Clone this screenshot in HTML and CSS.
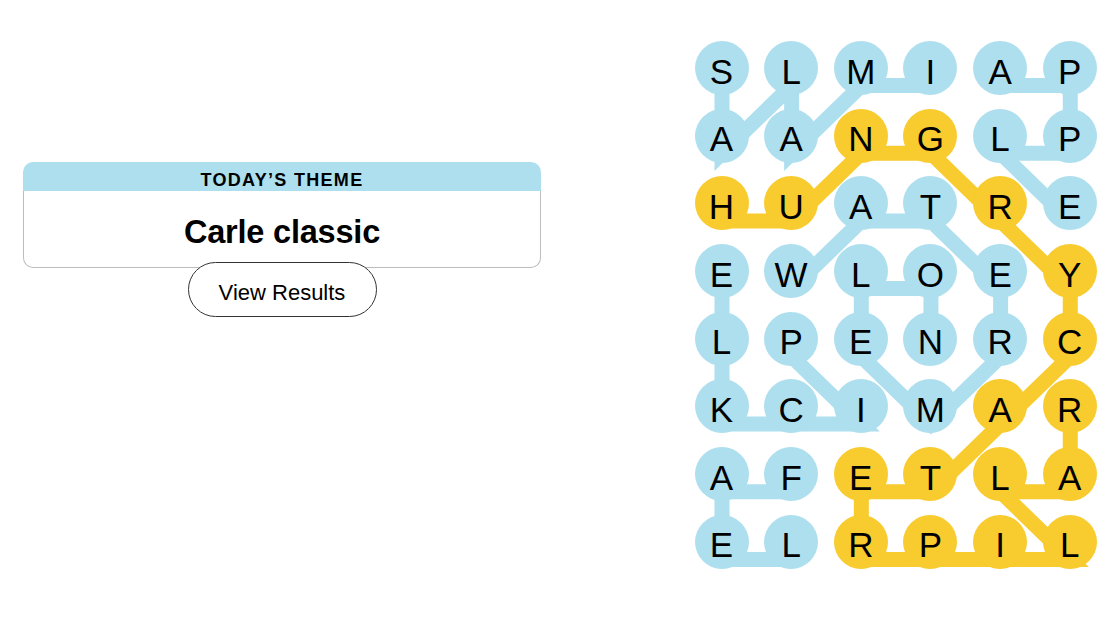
FILE: index.html
```html
<!DOCTYPE html>
<html lang="en">
<head>
<meta charset="utf-8">
<title>Strands</title>
<link rel="stylesheet" href="styles.css">
</head>
<body>
<main class="page">
  <section class="panel">
    <div class="card">
      <div class="card-head">TODAY’S THEME</div>
      <div class="card-body">Carle classic</div>
    </div>
    <button class="results-btn" type="button">View Results</button>
  </section>

  <section class="board">
    <svg class="links" width="403" height="528" viewBox="0 0 403 528" aria-hidden="true">
      <g class="theme-links">
        <polyline points="27,44.5 27,112.2 96.65,44.5 96.65,112.2 166.3,44.5 235.95,44.5"/>
        <polyline points="305.6,44.5 375.25,44.5 375.25,112.2 305.6,112.2 375.25,179.9"/>
        <polyline points="96.65,247.6 166.3,179.9 235.95,179.9 305.6,247.6 305.6,315.3 235.95,383 166.3,315.3 166.3,247.6 235.95,247.6 235.95,315.3"/>
        <polyline points="96.65,315.3 166.3,383 96.65,383 27,383 27,315.3 27,247.6"/>
        <polyline points="96.65,518.4 27,518.4 27,450.7 96.65,450.7"/>
      </g>
      <g class="span-links">
        <polyline points="27,179.9 96.65,179.9 166.3,112.2 235.95,112.2 305.6,179.9 375.25,247.6 375.25,315.3 305.6,383 235.95,450.7 166.3,450.7 166.3,518.4 235.95,518.4 305.6,518.4 375.25,518.4 305.6,450.7 375.25,450.7 375.25,383"/>
      </g>
    </svg>
    <div class="grid">
      <span class="cell theme">S</span><span class="cell theme">L</span><span class="cell theme">M</span><span class="cell theme">I</span><span class="cell theme">A</span><span class="cell theme">P</span>
      <span class="cell theme">A</span><span class="cell theme">A</span><span class="cell span">N</span><span class="cell span">G</span><span class="cell theme">L</span><span class="cell theme">P</span>
      <span class="cell span">H</span><span class="cell span">U</span><span class="cell theme">A</span><span class="cell theme">T</span><span class="cell span">R</span><span class="cell theme">E</span>
      <span class="cell theme">E</span><span class="cell theme">W</span><span class="cell theme">L</span><span class="cell theme">O</span><span class="cell theme">E</span><span class="cell span">Y</span>
      <span class="cell theme">L</span><span class="cell theme">P</span><span class="cell theme">E</span><span class="cell theme">N</span><span class="cell theme">R</span><span class="cell span">C</span>
      <span class="cell theme">K</span><span class="cell theme">C</span><span class="cell theme">I</span><span class="cell theme">M</span><span class="cell span">A</span><span class="cell span">R</span>
      <span class="cell theme">A</span><span class="cell theme">F</span><span class="cell span">E</span><span class="cell span">T</span><span class="cell span">L</span><span class="cell span">A</span>
      <span class="cell theme">E</span><span class="cell theme">L</span><span class="cell span">R</span><span class="cell span">P</span><span class="cell span">I</span><span class="cell span">L</span>
    </div>
  </section>
</main>
</body>
</html>
```

FILE: styles.css
```css
html, body {
  margin: 0;
  padding: 0;
  background: #ffffff;
}

body {
  font-family: "Liberation Sans", Arial, sans-serif;
  color: #000000;
  width: 1114px;
  height: 627px;
  overflow: hidden;
}

.page {
  display: flex;
  align-items: flex-start;
  gap: 153.5px;
  padding: 41px 0 0 23px;
}

.panel {
  width: 518px;
  margin-top: 121px;
  display: flex;
  flex-direction: column;
  align-items: center;
}

.card {
  width: 100%;
}

.card-head {
  background: #aedfee;
  border-radius: 10px 10px 0 0;
  height: 29px;
  box-sizing: border-box;
  padding-top: 7px;
  line-height: 22px;
  font-size: 18px;
  font-weight: 700;
  letter-spacing: 1.3px;
  text-align: center;
}

.card-body {
  border: 1px solid #bdbdbd;
  border-top: none;
  border-radius: 0 0 10px 10px;
  padding: 21.5px 0 16.5px;
  line-height: 38px;
  font-size: 32.5px;
  font-weight: 700;
  letter-spacing: -0.2px;
  text-align: center;
}

.results-btn {
  position: relative;
  z-index: 1;
  margin-top: -6.4px;
  width: 189px;
  height: 55px;
  box-sizing: border-box;
  padding: 17px 0 11px;
  border: 1px solid #333333;
  border-radius: 28px;
  background: #ffffff;
  color: #000000;
  font-family: "Liberation Sans", Arial, sans-serif;
  font-size: 22px;
  line-height: 25px;
  text-align: center;
}

.board {
  position: relative;
  width: 403px;
  height: 528px;
}

.links {
  position: absolute;
  top: 0;
  left: 0;
  z-index: 0;
  overflow: visible;
}

.links polyline {
  fill: none;
  stroke-width: 15;
  stroke-linejoin: miter;
  stroke-miterlimit: 4;
  stroke-linecap: butt;
}

.theme-links polyline {
  stroke: #aedfee;
}

.span-links polyline {
  stroke: #f8cb2e;
}

.grid {
  position: relative;
  z-index: 1;
  display: grid;
  grid-template-columns: repeat(6, 54px);
  grid-template-rows: repeat(8, 54px);
  column-gap: 15.65px;
  row-gap: 13.7px;
}

.cell {
  width: 54px;
  height: 54px;
  border-radius: 50%;
  display: flex;
  align-items: center;
  justify-content: center;
  padding-top: 6px;
  box-sizing: border-box;
  font-size: 35px;
  line-height: 1;
}

.cell.theme {
  background: #aedfee;
}

.cell.span {
  background: #f8cb2e;
}
```
